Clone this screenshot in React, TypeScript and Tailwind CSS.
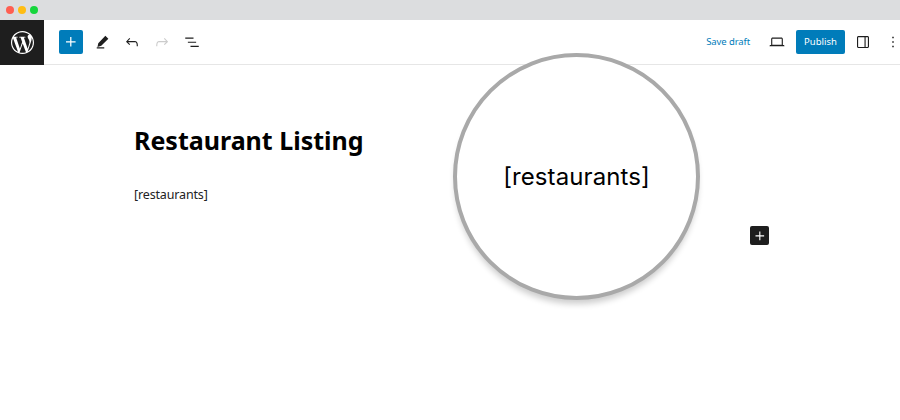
import React from "react";
import { SiWordpress } from "react-icons/si";

function Icon({ d, size = 20, className = "" }: { d: string; size?: number; className?: string }) {
  return (
    <svg viewBox="0 0 24 24" width={size} height={size} fill="currentColor" className={className}>
      <path d={d} />
    </svg>
  );
}

const plus = "M11 12.5V17.5H12.5V12.5H17.5V11H12.5V6H11V11H6V12.5H11Z";
const brush = "M5 20.5h10V19H5v1.5zM16.5 3.5l4 4L11 17l-5 1.5L7 13.5l9.5-10z";
const undo =
  "M18.3 11.7c-.6-.6-1.4-.9-2.3-.9H6.7l2.9-3.3-1.1-1-4.5 5L8.5 16l1-1-2.7-2.7H16c.5 0 .9.2 1.3.5 1 1 1 3.4 1 4.5v.3h1.5v-.2c0-1.5 0-4.3-1.5-5.7z";
const redo =
  "M15.6 6.5l-1.1 1 2.9 3.3H8c-.9 0-1.7.3-2.3.9-1.4 1.5-1.4 4.2-1.4 5.6v.2h1.5v-.3c0-1.1 0-3.5 1-4.5.3-.3.7-.5 1.3-.5h9.2L14.5 15l1.1 1.1 4.6-4.6-4.6-5z";
const listView = "M3 6h11v1.5H3V6Zm3.5 5.5h11V13h-11v-1.5ZM21 17H10v1.5h11V17Z";
const laptop =
  "M20.5 16h-.7V8c0-1.1-.9-2-2-2H6.2c-1.1 0-2 .9-2 2v8h-.7c-.8 0-1.5.7-1.5 1.5h20c0-.8-.7-1.5-1.5-1.5zM5.7 8c0-.3.2-.5.5-.5h11.6c.3 0 .5.2.5.5v7.6H5.7V8z";
const sidebar =
  "M18 4H6c-1.1 0-2 .9-2 2v12c0 1.1.9 2 2 2h12c1.1 0 2-.9 2-2V6c0-1.1-.9-2-2-2zm-4 14.5H6c-.3 0-.5-.2-.5-.5V6c0-.3.2-.5.5-.5h8v13zm4.5-.5c0 .3-.2.5-.5.5h-2.5v-13H18c.3 0 .5.2.5.5v12z";
const more = "M13 19h-2v-2h2v2zm0-6h-2v-2h2v2zm0-6h-2V5h2v2z";

export default function App() {
  return (
    <div className="relative w-[900px] h-[420px] overflow-hidden bg-white font-['Noto_Sans','Open_Sans',sans-serif] text-black">
      <div className="flex h-5 items-center gap-1 bg-[#dcdddf] pl-[6px]">
        <span className="h-2 w-2 rounded-full bg-[#ff5f52]" />
        <span className="h-2 w-2 rounded-full bg-[#ffbd14]" />
        <span className="h-2 w-2 rounded-full bg-[#16d63c]" />
      </div>

      <div className="flex h-[45px] items-center border-b border-[#e6e6e6]">
        <div className="flex h-[45px] w-11 items-center justify-center self-start bg-[#1e1e1e] text-white">
          <SiWordpress size={23} />
        </div>
        <button className="ml-[15px] flex h-6 w-6 items-center justify-center rounded-[2px] bg-[#007cba] text-white">
          <Icon d={plus} size={20} />
        </button>
        <div className="ml-[10px] flex items-center gap-[12px] text-[#1e1e1e]">
          <Icon d={brush} size={18} />
          <Icon d={undo} size={18} />
          <Icon d={redo} size={18} className="text-[#cccccc]" />
          <Icon d={listView} size={18} />
        </div>

        <div className="ml-auto flex items-center">
          <span className="text-[9.5px] tracking-[-0.1px] text-[#007cba]">Save draft</span>
          <Icon d={laptop} size={18} className="ml-[18px] text-[#1e1e1e]" />
          <button className="ml-[10px] h-6 w-[49px] rounded-[2px] bg-[#007cba] text-[9.5px] text-white">
            Publish
          </button>
          <Icon d={sidebar} size={18} className="ml-[9px] text-[#1e1e1e]" />
          <Icon d={more} size={18} className="ml-[12px] mr-[-2px] text-[#1e1e1e]" />
        </div>
      </div>

      <main className="pl-[134px] pt-[55px]">
        <h1 className="text-[25px] font-bold leading-[40px]">Restaurant Listing</h1>
        <p className="mt-[25px] text-[12.5px] leading-[20px] tracking-[-0.15px] text-[#222222]">[restaurants]</p>
      </main>

      <div className="absolute left-[453px] top-[53px] flex h-[247px] w-[247px] items-center justify-center rounded-full border-4 border-[#a9a9a9] bg-white shadow-[0_6px_6px_-2px_rgba(0,0,0,0.2)]">
        <span className="font-['Inter',sans-serif] text-[24px] font-normal tracking-[0.1px]">[restaurants]</span>
      </div>

      <div className="absolute left-[750px] top-[226px] flex h-[19px] w-[19px] items-center justify-center rounded-[2px] bg-[#1e1e1e] text-white">
        <Icon d={plus} size={18} />
      </div>
    </div>
  );
}
